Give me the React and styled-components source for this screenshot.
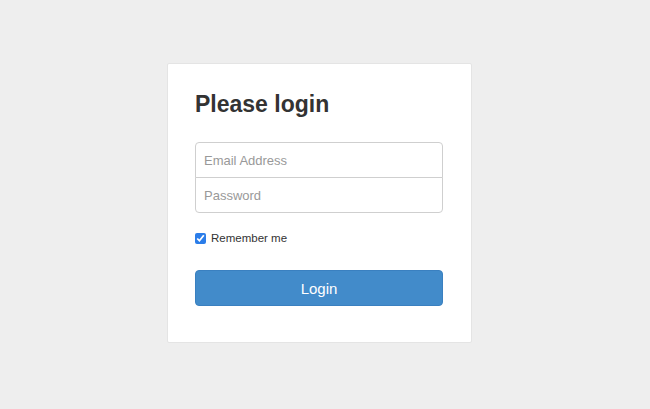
import React from "react";
import styled, { createGlobalStyle } from "styled-components";

const Global = createGlobalStyle`
  html, body { margin: 0; padding: 0; background: #eeeeee; }
  body { font-family: "Liberation Sans", Arial, Helvetica, sans-serif; color: #333; }
  * { box-sizing: border-box; }
`;

const Page = styled.div`
  min-height: 409px;
  display: flex;
  justify-content: center;
  align-items: flex-start;
  padding: 63px 11px 0 0;
`;

const Card = styled.form`
  width: 305px;
  background: #fff;
  border: 1px solid #e4e4e4;
  border-radius: 2px;
  padding: 28px 28px 36px 27px;
  display: flex;
  flex-direction: column;
`;

const Heading = styled.h2`
  margin: 0 0 25px;
  font-size: 23px;
  line-height: 1.1;
  font-weight: 700;
  color: #333;
`;

const InputGroup = styled.div`
  display: flex;
  flex-direction: column;
`;

const Input = styled.input`
  height: 36px;
  width: 100%;
  margin: 0;
  padding: 0 8px;
  font-family: inherit;
  font-size: 13px;
  color: #555;
  background: #fff;
  border: 1px solid #cfcfcf;
  border-radius: ${(p) => (p.$first ? "4px 4px 0 0" : "0 0 4px 4px")};
  margin-top: ${(p) => (p.$first ? "0" : "-1px")};
  outline: none;
  &::placeholder { color: #999; }
`;

const CheckRow = styled.label`
  display: flex;
  align-items: center;
  gap: 5px;
  height: 14px;
  margin-top: 18px;
  font-size: 11.5px;
  line-height: 14px;
  color: #333;
`;

const Check = styled.input`
  width: 11px;
  height: 11px;
  margin: 0;
  accent-color: #2b7de9;
`;

const Button = styled.button`
  margin-top: 25px;
  height: 36px;
  width: 100%;
  border: 1px solid #3a80c0;
  border-radius: 4px;
  background: #428bca;
  color: #fff;
  font-family: inherit;
  font-size: 15px;
  padding: 0;
`;

export default function App() {
  return (
    <>
      <Global />
      <Page>
        <Card onSubmit={(e) => e.preventDefault()}>
          <Heading>Please login</Heading>
          <InputGroup>
            <Input $first type="email" placeholder="Email Address" />
            <Input type="password" placeholder="Password" />
          </InputGroup>
          <CheckRow>
            <Check type="checkbox" defaultChecked />
            Remember me
          </CheckRow>
          <Button type="submit">Login</Button>
        </Card>
      </Page>
    </>
  );
}
